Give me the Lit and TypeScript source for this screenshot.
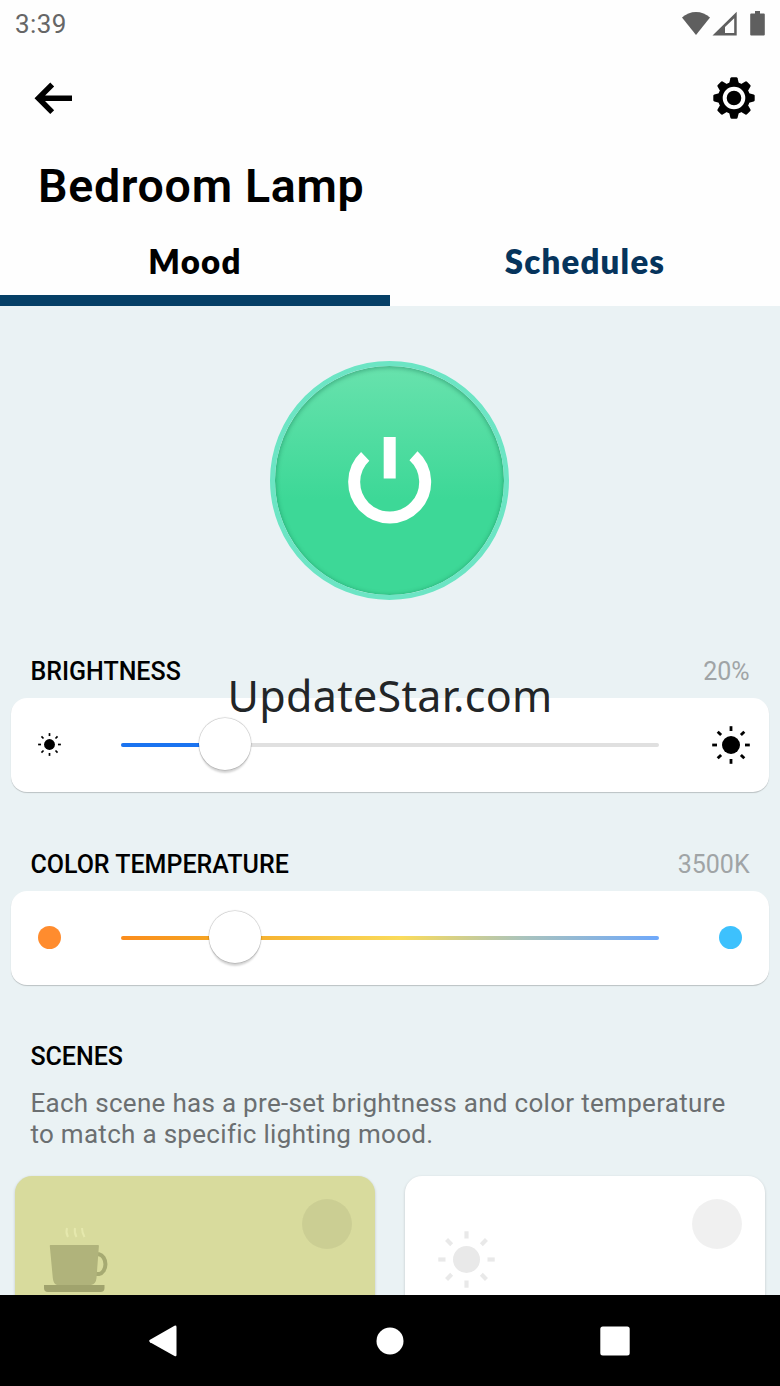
import { LitElement, html, svg, css } from 'lit';
import { customElement, property, state } from 'lit/decorators.js';
import { styleMap } from 'lit/directives/style-map.js';
import { classMap } from 'lit/directives/class-map.js';

const ANGLES = [0, 45, 90, 135, 180, 225, 270, 315];

@customElement('sun-icon')
export class SunIcon extends LitElement {
    static styles = css`
    :host {
      display: block;
    }

    svg {
      display: block;
      width: 100%;
      height: 100%;
      fill: currentColor;
    }
  `;

    render() {
        return html`
      <svg viewBox="-19 -19 38 38">
        <circle r="9"></circle>
        ${ANGLES.map((a) => svg`<rect x="-1.4" y="-18.800" width="2.800" height="4.800" transform="rotate(${a})"></rect>`)}
      </svg>
    `;
    }
}

@customElement('slider-card')
export class SliderCard extends LitElement {
    static styles = css`
    :host {
      display: block;
    }

    .head {
      display: flex;
      justify-content: space-between;
      padding: 0 19px;
      font-size: 25px;
      line-height: 30px;
    }

    .label {
      font-weight: 500;
      color: #000;
    }

    .value {
      color: #a0a4a6;
    }

    .card {
      display: grid;
      grid-template-columns: 76px 538px 76px;
      justify-content: space-between;
      align-items: center;
      height: 94px;
      margin-top: 11px;
      border-radius: 16px;
      background: #fff;
      box-shadow: 0 1px 1px rgba(0, 0, 0, 0.2);
    }

    .end {
      display: flex;
      justify-content: center;
    }

    .track {
      position: relative;
      height: 4px;
      border-radius: 2px;
      background: #e0e0e0;
    }

    .track.temperature {
      background: linear-gradient(90deg, #fb8c1c, #f5a623 18%, #fadb5a 52%, #a9c3bd 75%, #6ea8fb);
    }

    .fill {
      height: 4px;
      border-radius: 2px;
      background: #1a73f0;
    }

    .thumb {
      position: absolute;
      top: -25px;
      width: 52px;
      height: 52px;
      margin-left: -26px;
      border-radius: 50%;
      background: #fff;
      box-shadow: 0 0 1px 0.5px rgba(0, 0, 0, 0.25), 0 4px 2px -1px rgba(0, 0, 0, 0.16);
    }
  `;

    @property() label = '';
    @property() value = '';
    @property() kind = 'brightness';
    @property({ type: Number }) position = 0;

    render() {
        const warm = this.kind === 'temperature';
        return html`
      <div class="head">
        <span class="label">${this.label}</span>
        <span class="value">${this.value}</span>
      </div>
      <div class="card">
        <div class="end"><slot name="low"></slot></div>
        <div class=${classMap({ track: true, temperature: warm })}>
          ${warm ? '' : html`<div class="fill" style=${styleMap({ width: `${this.position}%` })}></div>`}
          <div class="thumb" style=${styleMap({ left: `${this.position}%` })}></div>
        </div>
        <div class="end"><slot name="high"></slot></div>
      </div>
    `;
    }
}

@customElement('app-root')
export class AppRoot extends LitElement {
    static styles = css`
    :host {
      display: flex;
      flex-direction: column;
      position: relative;
      width: 780px;
      height: 1386px;
      overflow: hidden;
      background: #eaf2f4;
      font-family: Roboto, sans-serif;
    }

    svg {
      display: block;
    }

    .top {
      height: 306px;
      background: #fefefe;
    }

    .status {
      display: flex;
      justify-content: space-between;
      align-items: center;
      height: 47px;
      padding: 0 14px 0 15px;
      color: #666;
    }

    .clock {
      font-size: 26px;
      line-height: 30px;
      letter-spacing: 0.4px;
    }

    .toolbar {
      display: flex;
      justify-content: space-between;
      align-items: center;
      height: 102px;
      padding: 0 25px 0 34px;
    }

    h1 {
      margin: 0;
      padding: 7px 0 0 38px;
      font-size: 46.5px;
      line-height: 60px;
      font-weight: 600;
      letter-spacing: 0.7px;
      color: #000;
    }

    .tabs {
      display: grid;
      grid-template-columns: 1fr 1fr;
      height: 90px;
    }

    .tab {
      box-sizing: border-box;
      padding-top: 11px;
      border-bottom: 11px solid transparent;
      font-family: Lato, sans-serif;
      font-size: 33px;
      font-weight: 800;
      line-height: 68px;
      letter-spacing: 1.2px;
      text-align: center;
      color: #06345c;
    }

    .tab.active {
      border-color: #053f66;
      color: #000;
    }

    .content {
      flex: 1;
      min-height: 0;
      overflow: hidden;
    }

    .power {
      display: flex;
      align-items: center;
      justify-content: center;
      box-sizing: border-box;
      width: 239px;
      height: 239px;
      margin: 54.5px 0 0 270.4px;
      border: 5.5px solid #6ce5c4;
      border-radius: 50%;
      background: linear-gradient(#68e2ad, #3dd897 58%) padding-box;
      box-shadow: inset 0 1px 4px 1px rgba(0, 90, 60, 0.35);
    }

    slider-card {
      margin: 0 11.4px;
    }

    .brightness {
      padding-top: 57px;
    }

    .temperature {
      padding-top: 58px;
    }

    .sun-small {
      width: 23px;
      height: 23px;
    }

    .sun-large {
      width: 38px;
      height: 38px;
    }

    .dot {
      width: 23px;
      height: 23px;
      border-radius: 50%;
    }

    .dot.warm {
      background: #ff8c2e;
    }

    .dot.cold {
      background: #3dc1fd;
    }

    h2 {
      margin: 57px 0 0 30.4px;
      font-size: 25px;
      line-height: 30px;
      font-weight: 500;
      color: #000;
    }

    .hint {
      margin: 16px 40px 0 30.4px;
      font-size: 26px;
      line-height: 31px;
      letter-spacing: 0.3px;
      color: #6b6f71;
    }

    .scenes {
      display: grid;
      grid-template-columns: 360px 360px;
      gap: 30px;
      margin: 26.5px 15px 0;
    }

    .scene {
      display: flex;
      justify-content: space-between;
      box-sizing: border-box;
      height: 240px;
      padding: 23px 23px 0 28px;
      border-radius: 17px;
      background: #fff;
      box-shadow: 0 1px 3px rgba(0, 0, 0, 0.18);
    }

    .scene.coffee {
      background: #d8db9d;
    }

    .check {
      width: 50px;
      height: 50px;
      border-radius: 50%;
      background: rgba(0, 0, 0, 0.06);
    }

    .cup {
      margin-top: 27px;
    }

    .scene-sun {
      width: 57px;
      height: 57px;
      margin: 32px 0 0 5px;
      color: #e9e9e9;
    }

    .nav {
      display: grid;
      grid-template-columns: 60px 60px 60px;
      justify-content: center;
      align-items: center;
      justify-items: center;
      column-gap: 165px;
      height: 91px;
      background: #000;
    }

    .back {
      margin-right: 4px;
    }

    .watermark {
      position: absolute;
      top: 666px;
      left: 0;
      width: 780px;
      font-family: 'Noto Sans', sans-serif;
      font-size: 43px;
      line-height: 60px;
      letter-spacing: 0.3px;
      text-align: center;
      color: #222527;
    }
  `;

    @state() private tab = 'Mood';

    private renderTab(name: string) {
        return html`
      <div class=${classMap({ tab: true, active: this.tab === name })} @click=${() => (this.tab = name)}>${name}</div>
    `;
    }

    private renderHeader() {
        return html`
      <header class="top">
        <div class="status">
          <span class="clock">3:39</span>
          <svg width="84" height="26" viewBox="682 10 84 26" fill="#5f5f5f">
            <path d="M682 16.500C689.500 9 702.500 9 710 16.500L696 34Z"></path>
            <path fill-rule="evenodd" d="M712.500 34.500L736.700 10.800V34.500ZM725 32H734.200V17.300L725 26Z"></path>
            <path d="M755 10h5v2.500h3.800q1 0 1 1v20q0 1-1 1h-12.600q-1 0-1-1v-20q0-1 1-1h3.800z"></path>
          </svg>
        </div>
        <div class="toolbar">
          <svg width="39" height="34" viewBox="34 81 39 34" fill="none" stroke="#000" stroke-width="5.500">
            <path d="M52.200 84.500L38.400 98.300L52.200 112.100M38.400 98.300H72"></path>
          </svg>
          <svg width="42" height="42" viewBox="-21 -21 42 42">
            <circle r="16"></circle>
            ${ANGLES.map((a) => svg`<path d="M-5 -14L-3.600 -19.700Q-3.300 -20.700 -2.300 -20.700H2.300Q3.300 -20.700 3.600 -19.700L5 -14Z" transform="rotate(${a})"></path>`)}
            <circle r="9.300" fill="none" stroke="#fff" stroke-width="4"></circle>
          </svg>
        </div>
        <h1>Bedroom Lamp</h1>
        <nav class="tabs">${this.renderTab('Mood')}${this.renderTab('Schedules')}</nav>
      </header>
    `;
    }

    private renderScenes() {
        return html`
      <h2>SCENES</h2>
      <p class="hint">Each scene has a pre-set brightness and color temperature to match a specific lighting mood.</p>
      <div class="scenes">
        <div class="scene coffee">
          <svg class="cup" width="66" height="68" viewBox="43 1226 66 68">
            <path d="M67 1228q-1.500 4.500 1 9M75 1228q-1 4.500 1.500 9M82 1228q0 5 2.500 9" fill="none" stroke="#e5e8ad" stroke-width="2"></path>
            <path d="M97.500 1254.300h1.500a7.500 10 0 0 1 0 19.800h-3" fill="none" stroke="#a6aa72" stroke-width="4"></path>
            <path d="M50.500 1245H98q1 0 .9 1L96.500 1278Q96 1284 91 1285H57Q53.500 1284 52.800 1278L49.800 1246Q49.700 1245 50.500 1245Z" fill="#b0b37b"></path>
            <path d="M44 1285h60.500v3q0 4-4 4h-52.500q-4 0-4-4z" fill="#a0a36d"></path>
          </svg>
          <div class="check"></div>
        </div>
        <div class="scene">
          <sun-icon class="scene-sun"></sun-icon>
          <div class="check"></div>
        </div>
      </div>
    `;
    }

    render() {
        return html`
      ${this.renderHeader()}
      <main class="content">
        <div class="power">
          <svg width="84" height="88" viewBox="348 436 84 88" fill="none" stroke="#fff" stroke-width="12">
            <path d="M389.700 437V478.500M365.200 456.300A35.500 35.500 0 1 0 413.500 455.700"></path>
          </svg>
        </div>
        <slider-card class="brightness" label="BRIGHTNESS" value="20%" position="19.4">
          <sun-icon slot="low" class="sun-small"></sun-icon>
          <sun-icon slot="high" class="sun-large"></sun-icon>
        </slider-card>
        <slider-card class="temperature" kind="temperature" label="COLOR TEMPERATURE" value="3500K" position="21.2">
          <div slot="low" class="dot warm"></div>
          <div slot="high" class="dot cold"></div>
        </slider-card>
        ${this.renderScenes()}
      </main>
      <footer class="nav">
        <svg class="back" width="28" height="32" viewBox="0 0 28 32" fill="#fff">
          <path d="M1 14.800L25.500 .7Q27.500 0 27.500 2V30Q27.500 32 25.500 31L1 17.200Q-.6 16 1 14.800Z"></path>
        </svg>
        <svg width="28" height="28" viewBox="0 0 28 28" fill="#fff">
          <circle cx="14" cy="14" r="13.500"></circle>
        </svg>
        <svg width="30" height="30" viewBox="0 0 30 30" fill="#fff">
          <rect x=".3" y=".5" width="29.400" height="29" rx="2.500"></rect>
        </svg>
      </footer>
      <div class="watermark">UpdateStar.com</div>
    `;
    }
}
